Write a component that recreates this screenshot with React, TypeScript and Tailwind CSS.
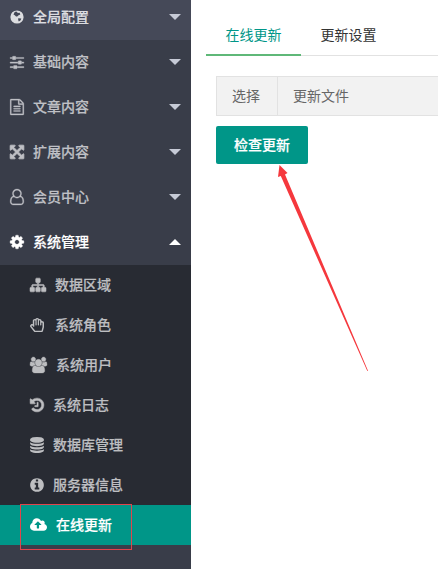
import { ReactNode } from 'react';
import { FaRegHandPaper } from 'react-icons/fa';

type IconProps = { d: string; box: string; className: string; weight?: number };

// All glyphs share the same 1792 unit em height
function Glyph({ d, box, className, weight = 0 }: IconProps) {
  return (
    <svg viewBox={box} className={`overflow-visible ${className}`} fill="currentColor" stroke="currentColor" strokeWidth={weight} aria-hidden="true">
      <path d={d} />
    </svg>
  );
}

const paths = {
  sliders: 'M352 1408v128h-352v-128h352zm352-128q26 0 45 19t19 45v256q0 26-19 45t-45 19h-256q-26 0-45-19t-19-45v-256q0-26 19-45t45-19h256zm160-384v128h-864v-128h864zm-640-512v128h-224v-128h224zm1312 1024v128h-736v-128h736zm-960-1152q26 0 45 19t19 45v256q0 26-19 45t-45 19h-256q-26 0-45-19t-19-45v-256q0-26 19-45t45-19h256zm640 512q26 0 45 19t19 45v256q0 26-19 45t-45 19h-256q-26 0-45-19t-19-45v-256q0-26 19-45t45-19h256zm320 128v128h-224v-128h224zm0-512v128h-864v-128h864z',
  file: 'M1596 380q28 28 48 76t20 88v1152q0 40-28 68t-68 28h-1344q-40 0-68-28t-28-68v-1600q0-40 28-68t68-28h896q40 0 88 20t76 48zm-444-244v376h376q-10-29-22-41l-313-313q-12-12-41-22zm384 1528v-1024h-416q-40 0-68-28t-28-68v-416h-768v1536h1280zm-1024-864q0-14 9-23t23-9h704q14 0 23 9t9 23v64q0 14-9 23t-23 9h-704q-14 0-23-9t-9-23v-64zm736 224q14 0 23 9t9 23v64q0 14-9 23t-23 9h-704q-14 0-23-9t-9-23v-64q0-14 9-23t23-9h704zm0 256q14 0 23 9t9 23v64q0 14-9 23t-23 9h-704q-14 0-23-9t-9-23v-64q0-14 9-23t23-9h704z',
  arrows: 'M1411 541l-355 355 355 355 144-144q29-31 70-14 39 17 39 59v448q0 26-19 45t-45 19h-448q-42 0-59-40-17-39 14-69l144-144-355-355-355 355 144 144q31 30 14 69-17 40-59 40h-448q-26 0-45-19t-19-45v-448q0-42 40-59 39-17 69 14l144 144 355-355-355-355-144 144q-19 19-45 19-12 0-24-5-40-17-40-59v-448q0-26 19-45t45-19h448q42 0 59 40 17 39-14 69l-144 144 355 355 355-355-144-144q-31-30-14-69 17-40 59-40h448q26 0 45 19t19 45v448q0 42-39 59-13 5-25 5-26 0-45-19z',
  user: 'M1201 784q47 14 89.500 38t89 73 79.500 115.500 55 172 22 236.500q0 154-100 263.500t-241 109.500h-854q-141 0-241-109.500t-100-263.500q0-131 22-236.500t55-172 79.500-115.500 89-73 89.500-38q-79-125-79-272 0-104 40.500-198.500t109.500-163.500 163.500-109.500 198.500-40.500 198.500 40.500 163.500 109.500 109.500 163.500 40.500 198.500q0 147-79 272zm-433-656q-159 0-271.500 112.500t-112.500 271.500 112.500 271.500 271.500 112.500 271.500-112.500 112.500-271.500-112.500-271.500-271.500-112.500zm427 1536q88 0 150.500-71.500t62.500-173.500q0-239-78.500-377t-225.500-145q-145 127-336 127t-336-127q-147 7-225.500 145t-78.500 377q0 102 62.500 173.500t150.500 71.500h854z',
  cog: 'M1152 896q0-106-75-181t-181-75-181 75-75 181 75 181 181 75 181-75 75-181zm512-109v222q0 12-8 23t-20 13l-185 28q-19 54-39 91 35 50 107 138 10 12 10 25t-9 23q-27 37-99 108t-94 71q-12 0-26-9l-138-108q-44 23-91 38-16 136-29 186-7 28-36 28h-222q-14 0-24.500-8.500t-11.500-21.500l-28-184q-49-16-90-37l-141 107q-10 9-25 9-14 0-25-11-126-114-165-168-7-10-7-23 0-12 8-23 15-21 51-66.500t54-70.500q-27-50-41-99l-183-27q-13-2-21-12.500t-8-23.500v-222q0-12 8-23t19-13l186-28q14-46 39-92-40-57-107-138-10-12-10-24 0-10 9-23 26-36 98.500-107.500t94.500-71.500q13 0 26 10l138 107q44-23 91-38 16-136 29-186 7-28 36-28h222q14 0 24.500 8.500t11.500 21.500l28 184q49 16 90 37l142-107q9-9 24-9 13 0 25 10 129 119 165 170 7 8 7 22 0 12-8 23-15 21-51 66.500t-54 70.500q26 50 41 98l183 28q13 2 21 12.500t8 23.500z',
  sitemap: 'M1792 1248v320q0 40-28 68t-68 28h-320q-40 0-68-28t-28-68v-320q0-40 28-68t68-28h96v-192h-512v192h96q40 0 68 28t28 68v320q0 40-28 68t-68 28h-320q-40 0-68-28t-28-68v-320q0-40 28-68t68-28h96v-192h-512v192h96q40 0 68 28t28 68v320q0 40-28 68t-68 28h-320q-40 0-68-28t-28-68v-320q0-40 28-68t68-28h96v-192q0-52 38-90t90-38h512v-192h-96q-40 0-68-28t-28-68v-320q0-40 28-68t68-28h320q40 0 68 28t28 68v320q0 40-28 68t-68 28h-96v192h512q52 0 90 38t38 90v192h96q40 0 68 28t28 68z',
  users: 'M529 896q-162 5-265 128h-134q-82 0-138-40.500t-56-118.500q0-353 124-353 6 0 43.500 21t97.500 42.500 119 21.500q67 0 133-23-5 37-5 66 0 139 81 256zm1071 637q0 120-73 189.500t-194 69.500h-874q-121 0-194-69.500t-73-189.500q0-53 3.500-103.500t14-109 26.500-108.500 43-97.500 62-81 85.500-53.500 111.500-20q10 0 43 21.500t73 48 107 48 135 21.500 135-21.500 107-48 73-48 43-21.500q61 0 111.500 20t85.500 53.500 62 81 43 97.500 26.500 108.500 14 109 3.500 103.500zm-1024-1277q0 106-75 181t-181 75-181-75-75-181 75-181 181-75 181 75 75 181zm704 384q0 159-112.500 271.500t-271.500 112.500-271.500-112.500-112.500-271.500 112.500-271.500 271.500-112.500 271.500 112.500 112.500 271.500zm576 225q0 78-56 118.500t-138 40.500h-134q-103-123-265-128 81-117 81-256 0-29-5-66 66 23 133 23 59 0 119-21.500t97.500-42.500 43.500-21q124 0 124 353zm-128-609q0 106-75 181t-181 75-181-75-75-181 75-181 181-75 181 75 75 181z',
  history: 'M1664 896q0 156-61 298t-164 245-245 164-298 61q-172 0-327-72.500t-264-204.500q-7-10-6.500-22.500t8.500-20.500l137-138q10-9 25-9 16 2 23 12 73 95 179 147t225 52q104 0 198.500-40.500t163.500-109.500 109.500-163.500 40.500-198.500-40.500-198.500-109.500-163.500-163.500-109.500-198.500-40.500q-98 0-188 35.500t-160 101.500l137 138q31 30 14 69-17 40-59 40h-448q-26 0-45-19t-19-45v-448q0-42 40-59 39-17 69 14l130 129q107-101 244.500-156.500t284.500-55.500q156 0 298 61t245 164 164 245 61 298zm-640-288v448q0 14-9 23t-23 9h-320q-14 0-23-9t-9-23v-64q0-14 9-23t23-9h224v-352q0-14 9-23t23-9h64q14 0 23 9t9 23z',
  database: 'M896 768q237 0 443-43t325-127v170q0 69-103 128t-280 93.500-385 34.500-385-34.500-280-93.500-103-128v-170q119 84 325 127t443 43zm0 768q237 0 443-43t325-127v170q0 69-103 128t-280 93.500-385 34.500-385-34.500-280-93.500-103-128v-170q119 84 325 127t443 43zm0-384q237 0 443-43t325-127v170q0 69-103 128t-280 93.500-385 34.500-385-34.500-280-93.500-103-128v-170q119 84 325 127t443 43zm0-1152q208 0 385 34.500t280 93.500 103 128v128q0 69-103 128t-280 93.500-385 34.500-385-34.500-280-93.500-103-128v-128q0-69 103-128t280-93.500 385-34.500z',
  info: 'M1152 1376v-160q0-14-9-23t-23-9h-96v-512q0-14-9-23t-23-9h-320q-14 0-23 9t-9 23v160q0 14 9 23t23 9h96v320h-96q-14 0-23 9t-9 23v160q0 14 9 23t23 9h448q14 0 23-9t9-23zm-128-896v-160q0-14-9-23t-23-9h-192q-14 0-23 9t-9 23v160q0 14 9 23t23 9h192q14 0 23-9t9-23zm640 416q0 209-103 385.500t-279.500 279.500-385.500 103-385.500-103-279.500-279.500-103-385.500 103-385.500 279.500-279.500 385.500-103 385.500 103 279.500 279.500 103 385.500z',
  cloud: 'M1216 864q0-14-9-23l-352-352q-9-9-23-9t-23 9l-351 351q-10 12-10 24 0 14 9 23t23 9h224v352q0 13 9.500 22.500t22.500 9.500h192q13 0 22.500-9.500t9.500-22.500v-352h224q13 0 22.500-9.500t9.500-22.500zm640 288q0 159-112.500 271.500t-271.500 112.500h-1088q-185 0-316.500-131.500t-131.500-316.500q0-130 70-240t188-165q-2-30-2-43 0-212 150-362t362-150q156 0 285.500 87t188.500 231q71-62 166-62 106 0 181 75t75 181q0 76-41 138 130 31 213.500 135.500t83.500 238.500z',
};

function GlobeIcon() {
  return (
    <svg viewBox="0 0 14 14" className="h-[14px] w-[14px]" aria-hidden="true">
      <circle cx="7" cy="7" r="6.600" fill="currentColor" />
      <path d="M4.500 2.300 6 1.400 7.200 2 7.600 3 9.600 2.800 10.300 4.600 8.600 5.200 7.200 6.600 6 6.600 4.800 5.200 3.500 4.500z M8.200 8.200 11.300 8.400 10.600 10.200 8.800 11.500 8.200 10z" fill="#434756" />
    </svg>
  );
}

// w-* of each glyph follows its own advance width
const mainMenu: { label: string; icon: ReactNode; className: string; open?: boolean }[] = [
  { label: '全局配置', icon: <GlobeIcon />, className: 'bg-[#454958] text-[#dcdde0]' },
  { label: '基础内容', icon: <Glyph d={paths.sliders} box="0 0 1536 1792" className="h-4 w-[14px]" weight={40} />, className: 'text-[#bfc0c5]' },
  { label: '文章内容', icon: <Glyph d={paths.file} box="128 0 1536 1792" className="h-4 w-[14px]" weight={30} />, className: 'text-[#bfc0c5]' },
  { label: '扩展内容', icon: <Glyph d={paths.arrows} box="128 0 1536 1792" className="h-4 w-[14px]" weight={90} />, className: 'text-[#bfc0c5]' },
  { label: '会员中心', icon: <Glyph d={paths.user} box="0 0 1536 1792" className="h-4 w-[14px]" weight={30} />, className: 'text-[#bfc0c5]' },
  { label: '系统管理', icon: <Glyph d={paths.cog} box="128 0 1536 1792" className="h-4 w-[14px]" weight={40} />, className: 'text-white', open: true },
];

const subMenu: { label: string; icon: ReactNode; active?: boolean }[] = [
  { label: '数据区域', icon: <Glyph d={paths.sitemap} box="0 0 1792 1792" className="h-4 w-4" weight={60} /> },
  { label: '系统角色', icon: <FaRegHandPaper preserveAspectRatio="none" className="mr-0.5 h-[14px] w-[14px]" /> },
  { label: '系统用户', icon: <Glyph d={paths.users} box="-64 0 1920 1792" className="h-4 w-[17px]" weight={40} /> },
  { label: '系统日志', icon: <Glyph d={paths.history} box="128 0 1536 1792" className="h-4 w-[14px]" weight={60} /> },
  { label: '数据库管理', icon: <Glyph d={paths.database} box="128 0 1536 1792" className="h-4 w-[14px]" /> },
  { label: '服务器信息', icon: <Glyph d={paths.info} box="128 0 1536 1792" className="h-4 w-[14px]" /> },
  { label: '在线更新', icon: <Glyph d={paths.cloud} box="-64 0 1920 1792" className="h-4 w-[17px]" />, active: true },
];

function Sidebar() {
  return (
    <aside className="w-[191px] shrink-0 bg-[#393d49] text-sm font-medium [-webkit-text-stroke:0.2px]">
      {mainMenu.map((item) => (
        <div key={item.label} className={`flex h-[45px] items-center px-2.5 pb-px first:h-10 first:pb-1.5 ${item.className}`}>
          {item.icon}
          <span className="ml-[9px] flex-1 pb-0.5">{item.label}</span>
          <svg viewBox="0 0 12 6" className="h-1.5 w-3" fill={item.open ? '#fff' : '#c6cad6'}>
            <path d={item.open ? 'M0 6 6 0l6 6z' : 'M0 0h12L6 6z'} />
          </svg>
        </div>
      ))}
      <div className="bg-[#282b33]">
        {subMenu.map((item) => (
          <div key={item.label} className={`relative flex h-10 items-center pl-[30px] ${item.active ? 'bg-[#009688] text-white' : 'text-[#bdbec1]'}`}>
            {item.icon}
            <span className="ml-[9px] pb-0.5">{item.label}</span>
            {item.active && <div className="absolute -top-px left-5 h-[46px] w-[112px] border border-[#e0444c]" />}
          </div>
        ))}
      </div>
    </aside>
  );
}

export default function App() {
  return (
    <div className="relative flex h-[569px] w-[438px] overflow-hidden bg-white font-['Noto_Sans_CJK_SC',sans-serif]">
      <Sidebar />
      <main className="min-w-0 flex-1 pt-4 pl-[15px] text-sm">
        <div className="flex h-10 border-b border-[#e2e2e2]">
          <div className="flex h-10 w-[95px] items-center justify-center border-b-2 border-[#5fb878] pb-0.5 text-[#009688]">在线更新</div>
          <div className="flex w-[95px] items-center justify-center pb-[3px] text-[#333]">更新设置</div>
        </div>
        <div className="mt-5 ml-2.5 flex h-10 border border-r-0 border-[#e2e2e2] bg-[#f2f2f2] text-[#666]">
          <div className="flex w-[61px] items-center border-r border-[#e2e2e2] pb-0.5 pl-[15px]">选择</div>
          <div className="flex items-center pb-0.5 pl-[15px]">更新文件</div>
        </div>
        <button className="mt-2.5 ml-2.5 block h-[38px] w-[92px] rounded-xs bg-[#009688] pb-0.5 text-center font-medium text-white [-webkit-text-stroke:0.2px]">检查更新</button>
      </main>
      <svg viewBox="0 0 100 215" className="absolute top-[160px] left-[270px] h-[215px] w-[100px]" fill="#f5383d">
        <path d="M9.500 5 8 17 10.800 16 97.300 211 98 210.700 15 14.500 17.500 13z" />
      </svg>
    </div>
  );
}
